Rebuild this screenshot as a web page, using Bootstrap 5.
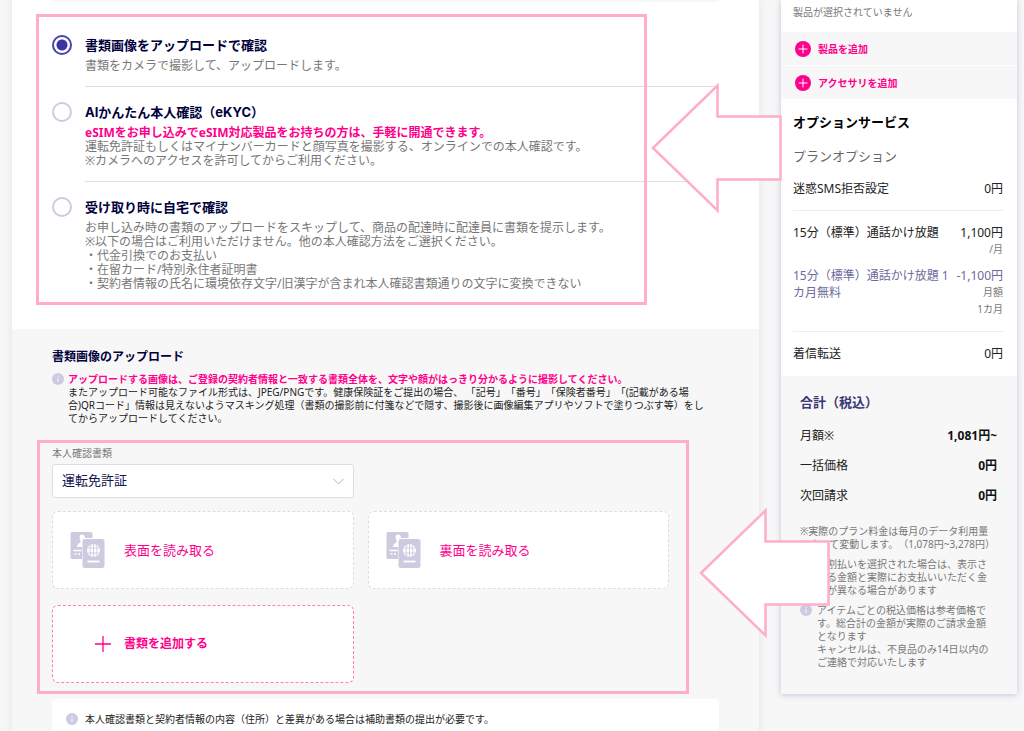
<!DOCTYPE html>
<html lang="ja">
<head>
<meta charset="utf-8">
<meta name="viewport" content="width=device-width, initial-scale=1">
<title>本人確認書類のアップロード</title>
<link href="https://cdn.jsdelivr.net/npm/bootstrap@5.3.0/dist/css/bootstrap.min.css" rel="stylesheet">
<style>
:root { --pink: #ff008c; --navy: #00003c; --mark: #ffadc9; --pale: #f7f7f7; --lav: #cdcbe0; }
body { font-family: "Noto Sans", "Noto Sans CJK JP", sans-serif; font-size: 12px; line-height: 14px; color: #222; background: var(--pale); overflow-x: hidden; text-spacing-trim: space-all; }
.page { padding: 0 7px 0 12px; gap: 22px; min-height: 100vh; }
.flow { min-width: 0; background: #fff; box-shadow: 0 0 8px #e2e2e2; }
.pane { padding-left: 40px; padding-right: 40px; }
.strip { height: 2px; background: var(--pale); border-radius: 0 0 4px 4px; }
.options { padding-top: 33px; padding-bottom: 38px; }
.pick { width: 20px; height: 20px; margin: 0; border: 2px solid var(--lav); }
.pick:checked { background: radial-gradient(circle, #3a35a3 5px, #fff 6px); border-color: #4843a8; }
.option { gap: 13px; padding-bottom: 15px; }
.option:last-child { padding-bottom: 0; }
.option-body { color: #777; padding-bottom: 13px; border-bottom: 1px solid #dfdeea; }
.option:last-child .option-body { padding: 0; border: 0; }
.option-title { font: 700 13px/20px Inter, "Noto Sans CJK JP", sans-serif; color: var(--navy); margin-bottom: 4px; display: block; }
.pink { color: var(--pink); }
.frame { border: 3px solid var(--mark); pointer-events: none; }
.frame-options { inset: 14px 112px 24px 24px; }
.frame-upload { inset: -6px 30px -11px -15px; }
.arrow { width: 131px; height: 130px; pointer-events: none; z-index: 5; }
.arrow-options { top: 83px; right: -23px; }
.arrow-upload { top: 62px; right: -111px; }
.upload { background: var(--pale); padding-top: 20px; }
.upload h2 { font-size: 12px; line-height: 16px; color: var(--navy); margin-bottom: 8px; }
.note { font-size: 10px; line-height: 13px; }
.lead-note { padding-right: 6px; }
.info { width: 12px; height: 12px; flex: none; }
.scan { margin-top: 21px; }
.doc-label { font-size: 10px; line-height: 14px; color: #777; margin-bottom: 4px; display: block; }
.doc-select { width: calc(50% - 32px); height: 34px; padding: 0 36px 0 9px; font-size: 13px; color: #14144f; border: 1px solid #dddcea; border-radius: 3px; background-position: right 8px center; background-size: 13px 13px; --bs-form-select-bg-img: url("data:image/svg+xml,%3csvg xmlns='http://www.w3.org/2000/svg' viewBox='0 0 13 13'%3e%3cpath fill='none' stroke='%23b5b3cc' d='M1.5 4l5 5 5-5'/%3e%3c/svg%3e"); }
.docs { grid-template-columns: 1fr 1fr; gap: 16px 14px; padding-right: 50px; margin-top: 13px; }
.doc-btn { height: 78px; background: #fff; border: 1px dashed #dcdbe6; border-radius: 6px; color: var(--pink); font-size: 13px; padding: 0 17px; gap: 19px; text-align: left; }
.doc-add { border-color: #ff7cc0; font-size: 12px; font-weight: 700; padding-left: 42px; gap: 13px; }
.extra { background: #fff; border-radius: 4px 4px 0 0; margin-top: 16px; padding: 14px 14px 8px; gap: 7px; }
.cart { width: 236px; flex: none; background: #fff; box-shadow: 0 1px 6px #c4c4dc; margin-bottom: 36px; }
.cart-pad { padding-left: 12px; padding-right: 14px; }
.cart-empty { font-size: 10px; color: #777; padding-top: 5px; padding-bottom: 13px; }
.cart-adds { gap: 1px; }
.cart-add { height: 33px; width: 100%; background: var(--pale); border: 0; color: var(--pink); font-size: 10px; font-weight: 700; padding: 0 14px; gap: 7px; }
.cart-options { padding-top: 14px; padding-bottom: 14px; }
.cart h2 { font-size: 13px; line-height: 18px; margin: 0 0 16px; }
.cart .cart-sub { color: #666; margin-bottom: 15px; }
.plan { line-height: 17px; gap: 4px; }
.plan + .plan { margin-top: 9px; }
.rule { border-bottom: 1px solid #ececec; padding-bottom: 13px; margin-bottom: 13px; }
.unit { display: block; font-size: 10px; color: #777; }
.off { color: #6d6a9c; }
.total { background: var(--pale); padding: 17px 20px 18px 19px; }
.cart .total-title { color: #3a3878; }
.sum { line-height: 18px; padding-bottom: 12px; }
.sum strong { color: #111; }
.terms { color: #777; margin-top: 8px; }
.terms p { margin-bottom: 7px; }
.term { gap: 5px; padding-right: 3px; margin-bottom: 7px; }
</style>
</head>
<body>
<svg class="d-none" aria-hidden="true">
  <symbol id="info" viewBox="0 0 12 12"><circle cx="6" cy="6" r="6" fill="#cdcbe0"/><path d="M6 5v4M6 3v1" stroke="#f7f7f7" fill="none"/></symbol>
  <symbol id="plus" viewBox="0 0 16 16"><circle cx="8" cy="8" r="8" fill="#ff008c"/><path d="M8 3.5v9M3.5 8h9" stroke="#fff" fill="none"/></symbol>
  <symbol id="arrow" viewBox="0 0 131 130"><path d="M2 65 66.500 2.500V33.500H129.500V96.500H66.500V127.500Z" fill="#fff" stroke="#ffadc9" stroke-width="2.500"/></symbol>
  <symbol id="docs" viewBox="0 0 34 36">
    <path d="M1.500 0H20.500Q22 0 22 1.500V6H13.500Q11.500 6 11.500 8V27H1.500Q0 27 0 25.500V1.500Q0 0 1.500 0Z" fill="#cdcbe0"/>
    <path d="M11.500 2.500a3 3 0 0 1 3 3.500H13Q11.500 6.500 11.500 9V15H6.500Q6.500 12 10 10.500V8.500Q7.500 3 11.500 2.500Z" fill="#fff"/>
    <path d="M3 18.500h8M4 22h2M7.500 22h2" stroke="#fff" stroke-width="1.500"/>
    <rect x="12" y="7" width="22" height="29" rx="2.500" fill="#cdcbe0"/>
    <circle cx="23" cy="18.500" r="6.500" fill="#fff"/>
    <path d="M23 12v13M17 16h12M17 21h12M20.500 12.500q-2 6 0 12M25.500 12.500q2 6 0 12" stroke="#cdcbe0" stroke-width=".9" fill="none"/>
    <path d="M17 29.500h12" stroke="#fff" stroke-width="1.800"/>
  </symbol>
</svg>

<div class="page d-flex align-items-start">
  <main class="flow flex-grow-1">
    <section class="pane position-relative">
      <div class="strip"></div>
      <div class="options">
        <div class="option d-flex">
          <input class="form-check-input pick flex-shrink-0" type="radio" name="verify" id="v1" checked>
          <div class="option-body flex-grow-1">
            <label class="option-title" for="v1">書類画像をアップロードで確認</label>
            書類をカメラで撮影して、アップロードします。
          </div>
        </div>
        <div class="option d-flex">
          <input class="form-check-input pick flex-shrink-0" type="radio" name="verify" id="v2">
          <div class="option-body flex-grow-1">
            <label class="option-title" for="v2">AIかんたん本人確認（eKYC）</label>
            <strong class="pink">eSIMをお申し込みでeSIM対応製品をお持ちの方は、手軽に開通できます。</strong><br>
            運転免許証もしくはマイナンバーカードと顔写真を撮影する、オンラインでの本人確認です。<br>
            ※カメラへのアクセスを許可してからご利用ください。
          </div>
        </div>
        <div class="option d-flex">
          <input class="form-check-input pick flex-shrink-0" type="radio" name="verify" id="v3">
          <div class="option-body flex-grow-1">
            <label class="option-title" for="v3">受け取り時に自宅で確認</label>
            お申し込み時の書類のアップロードをスキップして、商品の配達時に配達員に書類を提示します。<br>
            ※以下の場合はご利用いただけません。他の本人確認方法をご選択ください。<br>
            ・代金引換でのお支払い<br>
            ・在留カード/特別永住者証明書<br>
            ・契約者情報の氏名に環境依存文字/旧漢字が含まれ本人確認書類通りの文字に変換できない
          </div>
        </div>
      </div>
      <div class="frame frame-options position-absolute"></div>
      <svg class="arrow arrow-options position-absolute" aria-hidden="true"><use href="#arrow"/></svg>
    </section>

    <section class="pane upload">
      <h2 class="fw-bold">書類画像のアップロード</h2>
      <div class="note lead-note d-flex gap-1">
        <svg class="info" aria-hidden="true"><use href="#info"/></svg>
        <div><strong class="pink">アップロードする画像は、ご登録の契約者情報と一致する書類全体を、文字や顔がはっきり分かるように撮影してください。</strong><br>
        またアップロード可能なファイル形式は、JPEG/PNGです。健康保険証をご提出の場合、 「記号」「番号」「保険者番号」「(記載がある場合)QRコード」情報は見えないようマスキング処理（書類の撮影前に付箋などで隠す、撮影後に画像編集アプリやソフトで塗りつぶす等）をしてからアップロードしてください。</div>
      </div>
      <div class="scan position-relative">
        <label class="doc-label" for="doc">本人確認書類</label>
        <select class="form-select doc-select" id="doc"><option>運転免許証</option></select>
        <div class="docs d-grid">
          <button type="button" class="doc-btn d-flex align-items-center"><svg width="35" height="36" aria-hidden="true"><use href="#docs"/></svg>表面を読み取る</button>
          <button type="button" class="doc-btn d-flex align-items-center"><svg width="35" height="36" aria-hidden="true"><use href="#docs"/></svg>裏面を読み取る</button>
          <button type="button" class="doc-btn doc-add d-flex align-items-center"><svg width="16" height="16" viewBox="0 0 16 16" aria-hidden="true"><path d="M8 0v16M0 8h16" stroke="#ff008c" stroke-width="1.300"/></svg>書類を追加する</button>
        </div>
        <div class="frame frame-upload position-absolute"></div>
        <svg class="arrow arrow-upload position-absolute" aria-hidden="true"><use href="#arrow"/></svg>
      </div>
      <div class="extra note d-flex"><svg class="info" aria-hidden="true"><use href="#info"/></svg>本人確認書類と契約者情報の内容（住所）と差異がある場合は補助書類の提出が必要です。</div>
    </section>
  </main>

  <aside class="cart">
    <div class="cart-pad cart-empty">製品が選択されていません</div>
    <div class="cart-adds d-grid">
      <button type="button" class="cart-add d-flex align-items-center"><svg width="16" height="16" aria-hidden="true"><use href="#plus"/></svg>製品を追加</button>
      <button type="button" class="cart-add d-flex align-items-center"><svg width="16" height="16" aria-hidden="true"><use href="#plus"/></svg>アクセサリを追加</button>
    </div>
    <div class="cart-pad cart-options">
      <h2 class="fw-bold text-black">オプションサービス</h2>
      <h2 class="cart-sub fw-normal">プランオプション</h2>
      <div class="rule"><div class="plan d-flex justify-content-between"><span>迷惑SMS拒否設定</span><span>0円</span></div></div>
      <div class="rule">
        <div class="plan d-flex justify-content-between"><span>15分（標準）通話かけ放題</span><span class="text-end">1,100円<span class="unit">/月</span></span></div>
        <div class="plan d-flex justify-content-between off"><span>15分（標準）通話かけ放題 1カ月無料</span><span class="text-end flex-shrink-0">-1,100円<span class="unit">月額<br>1カ月</span></span></div>
      </div>
      <div class="plan d-flex justify-content-between"><span>着信転送</span><span>0円</span></div>
    </div>
    <div class="total">
      <h2 class="total-title fw-bold">合計（税込）</h2>
      <div class="sum d-flex justify-content-between"><span>月額※</span><strong>1,081円~</strong></div>
      <div class="sum d-flex justify-content-between"><span>一括価格</span><strong>0円</strong></div>
      <div class="sum d-flex justify-content-between"><span>次回請求</span><strong>0円</strong></div>
      <div class="terms note">
        <p>※実際のプラン料金は毎月のデータ利用量によって変動します。（1,078円~3,278円）</p>
        <div class="term d-flex"><svg class="info" aria-hidden="true"><use href="#info"/></svg><span>分割払いを選択された場合は、表示される金額と実際にお支払いいただく金額が異なる場合があります</span></div>
        <div class="term d-flex"><svg class="info" aria-hidden="true"><use href="#info"/></svg><span>アイテムごとの税込価格は参考価格です。総合計の金額が実際のご請求金額となります<br>キャンセルは、不良品のみ14日以内のご連絡で対応いたします</span></div>
      </div>
    </div>
  </aside>
</div>
<script src="https://cdn.jsdelivr.net/npm/bootstrap@5.3.0/dist/js/bootstrap.bundle.min.js"></script>
</body>
</html>
